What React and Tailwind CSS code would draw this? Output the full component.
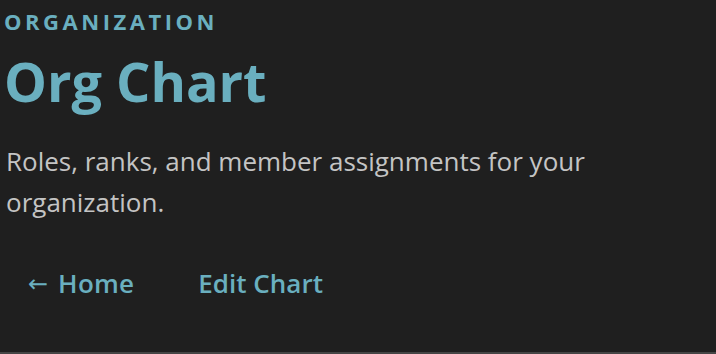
export default function App() {
  return (
    <div className="h-[354px] w-full bg-[#1f1f1f] flex flex-col font-['Open_Sans',sans-serif] overflow-hidden">
      <div className="flex-1 pl-1 pt-[7px]">
        <p className="text-[22px] leading-[28px] font-bold tracking-[0.16em] text-[#6aafbf]">
          ORGANIZATION
        </p>
        <h1 className="mt-[16px] text-[54px] leading-[60px] font-bold text-[#6aafbf]">
          Org Chart
        </h1>
        <p className="mt-[30px] pl-[2px] max-w-[620px] text-[26px] leading-[41px] text-[#c4c4c4]">
          Roles, ranks, and member assignments for your organization.
        </p>
        <div className="mt-[37px] flex items-center gap-4">
          <a className="px-6 py-1 flex items-center gap-[10px] text-[26px] font-semibold text-[#6aafbf]">
            <span className="font-['DejaVu_Sans',sans-serif] font-normal text-[24px]">←</span>
            <span className="tracking-[0.01em]">Home</span>
          </a>
          <a className="px-6 py-1 text-[26px] font-semibold text-[#6aafbf]">Edit Chart</a>
        </div>
      </div>
      <div className="h-[2px] bg-[#454545]" />
    </div>
  )
}
